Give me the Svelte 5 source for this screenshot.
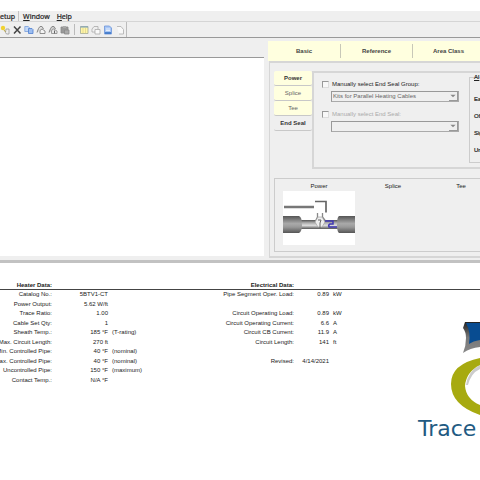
<script>
  const menus = [
    { key: '', rest: 'etup', active: true },
    { key: 'W', rest: 'indow' },
    { key: 'H', rest: 'elp' }
  ];

  const tabs = ['Basic', 'Reference', 'Area Class'];
  const sideTabs = [
    { name: 'Power', bold: true },
    { name: 'Splice' },
    { name: 'Tee' },
    { name: 'End Seal', bold: true, active: true }
  ];
  const allowances = ['Ea', 'Of', 'Sig', 'Un'];

  const heater = [
    ['Catalog No.:', '5BTV1-CT', ''],
    ['Power Output:', '5.62 W/ft', ''],
    ['Trace Ratio:', '1.00', ''],
    ['Cable Set Qty:', '1', ''],
    ['Sheath Temp.:', '185 °F', '(T-rating)'],
    ['Max. Circuit Length:', '270 ft', ''],
    ['Min. Controlled Pipe:', '40 °F', '(nominal)'],
    ['Max. Controlled Pipe:', '40 °F', '(nominal)'],
    ['Uncontrolled Pipe:', '150 °F', '(maximum)'],
    ['Contact Temp.:', 'N/A °F', '']
  ];

  const electrical = [
    ['Pipe Segment Oper. Load:', '0.89', 'kW'],
    ['', '', ''],
    ['Circuit Operating Load:', '0.89', 'kW'],
    ['Circuit Operating Current:', '6.6', 'A'],
    ['Circuit CB Current:', '11.9', 'A'],
    ['Circuit Length:', '141', 'ft'],
    ['', '', ''],
    ['Revised:', '4/14/2021', ''],
    ['', '', ''],
    ['', '', '']
  ];
</script>

<div class="app">
  <nav class="menu">
    {#each menus as m}
      <button class:active={m.active}>{#if m.key}<u>{m.key}</u>{/if}{m.rest}</button>
    {/each}
  </nav>

  <div class="toolbar">
    <div class="tools">
      <button aria-label="New item">
        <svg viewBox="0 0 10 10"><path d="M6 4h3v5H6.500L5.500 7.500z" fill="#eee" stroke="#999" stroke-width=".8" /><circle cx="3" cy="3" r="2.2" fill="#f0d232" /><path d="M4 5l1.500 2" stroke="#b39a20" stroke-width=".8" /></svg>
      </button>
      <button aria-label="Delete">
        <svg viewBox="0 0 10 10"><path d="M2 1.5l6.500 7M8.5 1.5L2 8.5" stroke="#444" stroke-width="1.500" /></svg>
      </button>
      <button aria-label="Copy">
        <svg viewBox="0 0 10 10"><path d="M.8 1.500h3.500l1 1v4h-4.500z" fill="#c3d8f6" stroke="#7a9fda" stroke-width=".8" /><path d="M4.500 3.500h3.500l1 1v4h-4.500z" fill="#9cbdf0" stroke="#4f7fcf" stroke-width=".8" /></svg>
      </button>
      <button aria-label="Find">
        <svg viewBox="0 0 10 10"><path d="M1 7.500l1.500-4 1.500-2h2L7.500 4" fill="#ddd" stroke="#888" /><path d="M4 8.500V5.500l2-1.500 3 2v2.500z" fill="#f4f4f4" stroke="#777" stroke-width=".8" /></svg>
      </button>
      <button aria-label="Find next">
        <svg viewBox="0 0 10 10"><path d="M1 7.500l1.500-4 1.500-2h2L7.500 4" fill="#ccc" stroke="#888" /><path d="M3.500 8.500V5.500l2-1.500 3.500 2v2.500z" fill="#e8e8e8" stroke="#888" stroke-width=".8" /><path d="M6.500 8.500V5.500" stroke="#666" /></svg>
      </button>
      <button aria-label="Paste">
        <svg viewBox="0 0 10 10"><path d="M1 2h7v6H1z" fill="#999" stroke="#888" stroke-width=".8" /><path d="M3 1h3v2H3z" fill="#aaa" /><path d="M4.500 5h4.500v4H4.500z" fill="#aaa" stroke="#888" stroke-width=".8" /></svg>
      </button>
      <span class="sep"></span>
      <button aria-label="Grid">
        <svg viewBox="0 0 10 10"><path d="M1.500 1.500h7.500v7H1.500z" fill="#fff5a8" stroke="#a2aa98" stroke-width=".8" /><path d="M1.500 2h7.500" stroke="#729bc0" /><path d="M4 3v5.500M6.500 3v5.500" stroke="#d4cb84" stroke-width=".6" /></svg>
      </button>
      <button aria-label="Pages">
        <svg viewBox="0 0 10 10"><path d="M1 4l2-2.500h4v3" fill="#eee" stroke="#aaa" stroke-width=".8" /><path d="M1 4v3h3M4 4.500h5v4.500H4z" fill="#fafafa" stroke="#aaa" stroke-width=".8" /></svg>
      </button>
      <button aria-label="Report">
        <svg viewBox="0 0 10 10"><path d="M1.500 1h5l2 2v6h-7z" fill="#a9c7f5" stroke="#6a93d8" stroke-width=".8" /><path d="M3 4h4M3 5.500h4" stroke="#fff" stroke-width=".7" /><path d="M2 8h6" stroke="#2f6cc2" stroke-width="1.500" /></svg>
      </button>
      <button aria-label="Blank page">
        <svg viewBox="0 0 10 10"><path d="M2 1.500h4l2.500 3V9H4" fill="#f8f8f8" stroke="#b4b4b4" stroke-width=".9" /></svg>
      </button>
    </div>
  </div>

  <main class="workspace">
    <section class="canvas"></section>

    <section class="props">
      <div class="tabs">
        {#each tabs as tab}
          <button>{tab}</button>
        {/each}
      </div>

      <div class="panel">
        <div class="upper">
          <div class="side-tabs">
            {#each sideTabs as t}
              <button class:bold={t.bold} class:active={t.active}>{t.name}</button>
            {/each}
          </div>

          <div class="group">
            <div class="selects">
              <label class="check">
                <input type="checkbox" />
                <span>Manually select End Seal Group:</span>
              </label>
              <div class="drop">
                <select disabled aria-label="End seal group">
                  <option>Kits for Parallel Heating Cables</option>
                </select>
                <i><svg viewBox="0 0 6 6"><path d="M1 2h4L3 4z" fill="#888" /></svg></i>
              </div>
              <label class="check off">
                <input type="checkbox" disabled />
                <span>Manually select End Seal:</span>
              </label>
              <div class="drop">
                <select disabled aria-label="End seal">
                  <option></option>
                </select>
                <i><svg viewBox="0 0 6 6"><path d="M1 2h4L3 4z" fill="#888" /></svg></i>
              </div>
            </div>
            <fieldset>
              <legend>Al</legend>
              {#each allowances as a}
                <p>{a}</p>
              {/each}
            </fieldset>
          </div>
        </div>

        <div class="preview">
          <div>
            <span>Power</span>
            <svg class="pipe" viewBox="0 0 72 54">
              <defs>
                <linearGradient id="steel" x1="0" y1="0" x2="0" y2="1">
                  <stop offset="0" stop-color="#555" />
                  <stop offset=".45" stop-color="#aaa" />
                  <stop offset=".65" stop-color="#999" />
                  <stop offset="1" stop-color="#555" />
                </linearGradient>
                <linearGradient id="tube" x1="0" y1="0" x2="0" y2="1">
                  <stop offset="0" stop-color="#555" />
                  <stop offset=".3" stop-color="#aaa" />
                  <stop offset=".6" stop-color="#ddd" />
                  <stop offset="1" stop-color="#555" />
                </linearGradient>
              </defs>
              <rect width="72" height="54" fill="#fff" />
              <path d="M1 16h30" stroke="#777" stroke-width="2.500" />
              <path d="M32 10.500h11v11" fill="none" stroke="#666" stroke-width="1.700" />
              <rect x="16" y="29" width="40" height="9" fill="url(#tube)" />
              <path d="M0 25h16q3 1 3 8.500T16 42H0z" fill="url(#steel)" />
              <path d="M72 25H56q-2 1-2 8.500T56 42h16z" fill="url(#steel)" />
              <path d="M34.500 22v4l-2 4M39.500 22v4l3 4" fill="none" stroke="#888" stroke-width="1.300" />
              <path d="M35 26h4l3 5-3 5h-4l-3-5z" fill="#eee" stroke="#999" stroke-width=".6" />
              <path d="M35 29h3l-1 3v5" fill="none" stroke="#666" />
              <path d="M42 30h8v3h-3q-2 1-1 3h8" fill="none" stroke="#4038b4" stroke-width="1.500" />
            </svg>
          </div>
          <div><span>Splice</span></div>
          <div><span>Tee</span></div>
        </div>
      </div>
    </section>
  </main>

  <section class="report">
    <div class="headings">
      <h2 class="heater-title">Heater Data:</h2>
      <h2 class="electrical-title">Electrical Data:</h2>
    </div>
    <div class="data">
      <table class="heater">
        <tbody>
          {#each heater as [label, value, note]}
            <tr><th>{label}</th><td class="value">{value}</td><td class="note">{note}</td></tr>
          {/each}
        </tbody>
      </table>
      <table class="electrical">
        <tbody>
          {#each electrical as [label, value, unit]}
            <tr><th>{label}</th><td class="value">{value}</td><td class="note">{unit}</td></tr>
          {/each}
        </tbody>
      </table>
      <div class="logo">
        <svg viewBox="0 0 62 96">
          <defs>
            <linearGradient id="edge" x1="0" y1="0" x2="0" y2="1">
              <stop offset="0" stop-color="#222" />
              <stop offset=".5" stop-color="#777" />
              <stop offset="1" stop-color="#888" />
            </linearGradient>
          </defs>
          <path d="M47 0h15v25q-10 1-17 6 3-7 3-15 0-6-3-10z" fill="url(#edge)" />
          <path d="M48 1h14v17q-7 1-11 4 2-12-3-21z" fill="#084c91" />
          <path d="M62 43q-12 6-14 20h2q3-12 12-16z" fill="#ccc" />
          <path d="M62 36Q33 42 33 62q0 21 29 31V83Q48 77 47 64q1-14 15-21z" fill="#a7aa10" />
        </svg>
        <strong>Trace</strong>
      </div>
    </div>
  </section>
</div>

<style>
  :global(body) {
    background: #fff;
    overflow: hidden;
  }

  .app {
    padding-top: 11px;
    font: 6px/9px "Liberation Sans", Arial, sans-serif;
    color: #222;
    overflow: hidden;
  }

  button,
  select {
    font: inherit;
    color: inherit;
    border: 0;
    padding: 0;
    margin: 0;
    background: none;
  }

  .menu {
    display: flex;
    gap: 4px;
    height: 10px;
    background: #efefef;
    border-bottom: 1px solid #d5d5d5;
  }

  .menu button {
    font-family: "Noto Sans", sans-serif;
    font-size: 7px;
    padding-right: 3px;
    -webkit-text-stroke: 0.2px #222;
  }

  .menu button.active {
    border-right: 1px solid #c4c4c4;
  }

  .toolbar {
    background: #efefef;
    border-bottom: 1px solid #999;
  }

  .tools {
    display: flex;
    align-items: center;
    gap: 2px;
    width: 126px;
    height: 15px;
    border-right: 1px solid #bbb;
  }

  .tools button,
  .tools svg {
    display: block;
    width: 10px;
    height: 10px;
  }

  .tools button {
    flex: none;
  }

  .sep {
    width: 1px;
    height: 11px;
    margin: 0 2px;
    background: #bbb;
  }

  .workspace {
    display: flex;
    background: #efefef;
    border-bottom: 3px solid #c2c2c2;
  }

  .canvas {
    width: 55%;
    margin: 19px 0 4px;
    border-top: 1px solid #999;
    background: #fff;
  }

  .props {
    flex: 1;
    min-width: 0;
    padding: 3px 0 2px 4px;
  }

  .tabs {
    display: flex;
    background: #ffffdf;
    height: 20px;
    padding: 3px 0;
    box-sizing: border-box;
    overflow: hidden;
  }

  .tabs button {
    flex: none;
    width: 72px;
    font-weight: bold;
    color: #444;
  }

  .tabs button + button {
    border-left: 1px solid #c8c8b8;
  }

  .panel {
    margin-left: 1px;
    padding: 8px 0 4px 4px;
    border: 2px solid #d6d6d6;
    border-width: 2px 0 2px 1px;
  }

  .upper {
    display: flex;
  }

  .side-tabs {
    width: 38px;
  }

  .side-tabs button {
    display: block;
    width: 100%;
    height: 15px;
    color: #666;
    background: #ffffdf;
    border-bottom: 1px solid #c8c8c8;
    border-radius: 2px;
  }

  .side-tabs button.bold {
    font-weight: bold;
    color: #333;
  }

  .side-tabs button.active {
    background: #efefef;
  }

  .group {
    flex: 1;
    display: flex;
    gap: 10px;
    min-width: 0;
    height: 98px;
    box-sizing: border-box;
    padding-left: 8px;
    border: 2px solid #d6d6d6;
    border-right: 0;
    overflow: hidden;
  }

  .selects {
    flex: none;
    width: 137px;
    padding-top: 6px;
  }

  .check {
    display: flex;
    align-items: center;
    gap: 3px;
    height: 11px;
  }

  .check input {
    appearance: none;
    width: 7px;
    height: 7px;
    margin: 0;
    border: 1px solid #999;
    border-right-color: #ddd;
    border-bottom-color: #ddd;
    background: #f8f8f8;
  }

  .check.off {
    color: #aaa;
  }

  .drop {
    display: flex;
    align-items: center;
    height: 11px;
    box-sizing: border-box;
    margin: 1px 0 7px 9px;
    border: 1px solid #999;
    border-right-color: #aaa;
    border-bottom-color: #aaa;
  }

  .drop select {
    appearance: none;
    flex: 1;
    min-width: 0;
    height: 9px;
    padding-left: 1px;
    color: #666;
    opacity: 1;
  }

  .drop i {
    display: flex;
    width: 8px;
    height: 8px;
    border-right: 1px solid #999;
    border-bottom: 1px solid #999;
  }

  .drop svg {
    width: 8px;
  }

  fieldset {
    flex: none;
    width: 60px;
    margin: 0 0 4px;
    padding: 13px 0 0 4px;
    border: 1px solid #ccc;
    box-sizing: border-box;
    -webkit-text-stroke: 0.2px #222;
  }

  legend {
    padding: 0;
    text-decoration: underline;
  }

  fieldset p {
    margin: 0 0 8px;
  }

  .preview {
    display: grid;
    grid-template-columns: 72px 72px 60px;
    gap: 2px;
    height: 74px;
    box-sizing: border-box;
    margin-top: 9px;
    padding: 3px 0 0 8px;
    border: 1px solid #ccc;
    border-right: 0;
    text-align: center;
  }

  .pipe {
    display: block;
    width: 72px;
    height: 54px;
  }

  .report {
    padding-top: 18px;
  }

  .headings {
    display: flex;
    border-bottom: 1px solid #444;
  }

  h2 {
    margin: 0;
    font-size: 6px;
    line-height: 8px;
    text-align: right;
  }

  .heater-title {
    width: 52px;
  }

  .electrical-title {
    width: 242px;
  }

  .data {
    display: flex;
    align-items: flex-start;
  }

  table {
    flex: none;
    table-layout: fixed;
    height: 95px;
    border-collapse: collapse;
    white-space: nowrap;
  }

  th,
  td {
    height: 9px;
    padding: 0;
    font-weight: normal;
    text-align: right;
  }

  .heater {
    width: 180px;
    margin-left: -20px;
  }

  .heater th {
    width: 72px;
  }

  .heater .value {
    width: 56px;
  }

  .electrical {
    width: 203px;
  }

  .electrical th {
    width: 134px;
  }

  .electrical .value {
    width: 35px;
  }

  td.note {
    text-align: left;
    padding-left: 4px;
  }

  .logo {
    width: 62px;
    margin: 32px 0 0 auto;
  }

  .logo svg {
    display: block;
    width: 62px;
    height: 96px;
  }

  .logo strong {
    display: block;
    font: 22px/22px "DejaVu Sans", sans-serif;
    color: #225a82;
  }
</style>
